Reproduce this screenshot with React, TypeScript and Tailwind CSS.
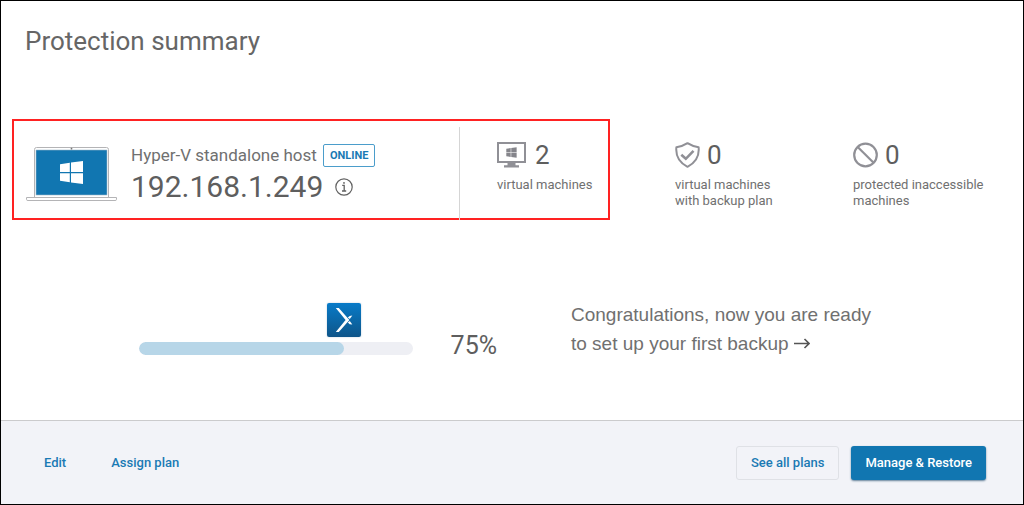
import type { ReactNode } from "react";

const PROGRESS = 75;

function WindowsMark() {
  return (
    <>
      <path d="M0 3.2 9.8 1.8V11H0Z" />
      <path d="M11 1.6 23 0V11H11Z" />
      <path d="M0 12.2H9.8V21.3L0 19.8Z" />
      <path d="M11 12.2H23V23L11 21.5Z" />
    </>
  );
}

function LaptopIcon() {
  return (
    <svg className="h-[54px] w-[91px] shrink-0" viewBox="0 0 91 54" fill="none" aria-hidden="true">
      <path d="M8.5 51V2.5Q8.5.5 10.5.5H80.5Q82.5.5 82.5 2.5V51" fill="#fff" stroke="#b4b4b6" />
      <rect x="10" y="3" width="71" height="45" fill="#1176b1" stroke="#9fb9c9" strokeWidth=".6" />
      <circle cx="45.5" cy="1.7" r=".9" fill="#777" />
      <path d="M.5 50.5H90.5V52.5Q90.5 53.5 89 53.5H2Q.5 53.5.5 52.5Z" fill="#fff" stroke="#b4b4b6" />
      <g transform="translate(34 14)" fill="#fff">
        <WindowsMark />
      </g>
    </svg>
  );
}

function MonitorIcon() {
  return (
    <svg className="h-[26px] w-[29px]" viewBox="0 0 29 26" aria-hidden="true">
      <rect x="1" y="1" width="27" height="19" fill="#fff" stroke="#909096" strokeWidth="2" />
      <path d="M10.5 21H18.5V23.2H22V25.4H7V23.2H10.5Z" fill="#909096" />
      <g transform="translate(9.3 5.3) scale(.45)" fill="#85858b">
        <WindowsMark />
      </g>
    </svg>
  );
}

function ShieldIcon() {
  return (
    <svg className="h-[26px] w-[25px]" viewBox="0 0 25 26" fill="none" stroke="#909096" strokeWidth="2" aria-hidden="true">
      <path d="M12.5 1.2Q17 4.2 23.6 5.2Q25 18.5 12.5 24.8Q0 18.5 1.4 5.2Q8 4.2 12.5 1.2Z" strokeLinejoin="round" />
      <path d="M6.3 12.7 10.8 16.8 18.5 8.8" strokeWidth="2.6" />
    </svg>
  );
}

function BlockedIcon() {
  return (
    <svg className="h-[26px] w-[25px]" viewBox="0 0 25 26" fill="none" stroke="#909096" strokeWidth="2.2" aria-hidden="true">
      <circle cx="12.5" cy="13" r="11.3" />
      <path d="M4.7 5 20.6 20.7" />
    </svg>
  );
}

function InfoIcon() {
  return (
    <svg className="size-[18px]" viewBox="0 0 18 18" fill="none" stroke="#626262" aria-hidden="true">
      <circle cx="9" cy="9" r="8.2" strokeWidth="1.2" />
      <path d="M7.2 7.4H9.2V13M7 13H11.2" strokeWidth="1.3" />
      <circle cx="9" cy="4.9" r=".9" fill="#626262" stroke="none" />
    </svg>
  );
}

function ProductBadge() {
  return (
    <svg className="size-[34px]" viewBox="0 0 34 34" aria-hidden="true">
      <defs>
        <linearGradient id="badge" x1="0" y1="0" x2="0" y2="1">
          <stop offset="0" stopColor="#087bc8" />
          <stop offset="1" stopColor="#0e5589" />
        </linearGradient>
      </defs>
      <rect width="34" height="34" rx="2" fill="url(#badge)" />
      <g fill="#fff">
        <path d="M8.8 5H11.8L22.4 17 11.8 29H8.8L18.6 17Z" />
        <path d="M20.8 14.6Q22.4 12.4 25.3 12.4L22.8 16Z" />
        <path d="M20.8 19.4Q22.4 21.6 25.3 21.6L22.8 18Z" />
      </g>
    </svg>
  );
}

function Metric({ icon, value, gap, children }: { icon: ReactNode; value: number; gap: string; children: ReactNode }) {
  return (
    <div>
      <div className={`flex h-7 items-center ${gap}`}>
        {icon}
        <span className="text-[26px] leading-7">{value}</span>
      </div>
      <p className="mt-2 text-[13px] leading-4 whitespace-nowrap text-[#707070]">{children}</p>
    </div>
  );
}

export default function App() {
  return (
    <div className="flex min-h-screen flex-col border border-black bg-white font-['Roboto',sans-serif] text-[#5e5e5e]">
      <main className="flex-1 pb-10">
        <h1 className="px-6 pt-6 text-[26px] leading-8 text-[#666]">Protection summary</h1>

        <section className="mt-[62px] grid grid-cols-[609fr_413fr]">
          <div className="ml-[11px] grid h-[101px] grid-cols-[448fr_150fr] border-2 border-[#ff2222]">
            <div className="flex items-start pl-3">
              <div className="pt-[26px]">
                <LaptopIcon />
              </div>
              <div className="pt-[22px] pl-[14px]">
                <div className="flex h-6 items-center gap-[6px]">
                  <span className="text-[17px] leading-6 whitespace-nowrap text-[#707070]">Hyper-V standalone host</span>
                  <span className="rounded-xs border border-[#4b9dcb] px-1.5 text-[11px] leading-[21px] font-bold text-[#1a7ab4]">
                    ONLINE
                  </span>
                </div>
                <div className="mt-[2px] flex items-center gap-3">
                  <span className="text-[30px] leading-9">192.168.1.249</span>
                  <button type="button" aria-label="Host details">
                    <InfoIcon />
                  </button>
                </div>
              </div>
            </div>
            <div className="mt-1.5 -mb-0.5 border-l border-[#d5d5d5] pt-[14px] pl-[37px]">
              <Metric icon={<MonitorIcon />} value={2} gap="gap-[9px]">
                virtual machines
              </Metric>
            </div>
          </div>

          <div className="grid grid-cols-[178fr_170fr] pt-[22px] pl-[65px]">
            <Metric icon={<ShieldIcon />} value={0} gap="gap-[7px]">
              virtual machines
              <br />
              with backup plan
            </Metric>
            <Metric icon={<BlockedIcon />} value={0} gap="gap-[7px]">
              protected inaccessible
              <br />
              machines
            </Metric>
          </div>
        </section>

        <section className="mt-20 grid grid-cols-[570fr_452fr]">
          <div className="flex items-center gap-[38px] pt-[30px] pr-[74px] pl-[138px]">
            <div className="relative mt-1 flex-1">
              <div
                role="progressbar"
                aria-label="Setup progress"
                aria-valuenow={PROGRESS}
                className="h-[13px] overflow-hidden rounded-full bg-[#eeeff4]"
              >
                <div className="h-full rounded-full bg-[#b7d6e8]" style={{ width: `${PROGRESS}%` }} />
              </div>
              <div
                className="absolute bottom-[18px] -translate-x-1/2 rounded-xs shadow-[0_0_2px_#b9cbd8]"
                style={{ left: `${PROGRESS}%` }}
              >
                <ProductBadge />
              </div>
            </div>
            <span className="text-[25px] leading-8">{PROGRESS}%</span>
          </div>
          <a href="#backup" className="justify-self-start font-['Liberation_Sans',sans-serif] text-[19px] leading-[29px] text-[#707070]">
            Congratulations, now you are ready
            <br />
            to set up your first backup
            <svg className="ml-[5px] inline-block h-3 w-4 align-baseline" viewBox="0 0 16 12" fill="none" stroke="#555" strokeWidth="1.6" aria-hidden="true">
              <path d="M0 5.5H15M10.5 1 15 5.5 10.5 10" />
            </svg>
          </a>
        </section>
      </main>

      <footer className="flex h-[84px] items-center justify-between border-t border-[#cbcbcd] bg-[#f2f3f8] pr-[37px] pl-[43px] text-[13px] font-medium text-[#1a7ab4]">
        <nav className="flex gap-[45px]">
          <a href="#edit">Edit</a>
          <a href="#assign">Assign plan</a>
        </nav>
        <div className="flex gap-3">
          <button type="button" className="h-[34px] rounded-[3px] border border-[#dfe1e6] px-[14px]">
            See all plans
          </button>
          <button type="button" className="h-[34px] rounded-[3px] bg-[#1176b1] px-[14px] text-white shadow-[0_1px_2px_#64819a]">
            Manage &amp; Restore
          </button>
        </div>
      </footer>
    </div>
  );
}
